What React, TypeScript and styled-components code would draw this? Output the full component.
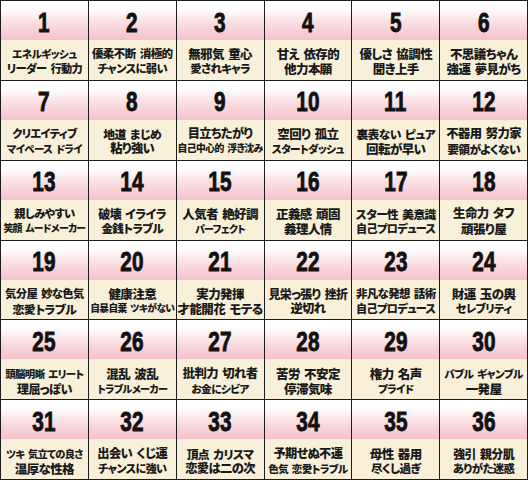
import { useLayoutEffect, useRef, useState } from "react";
import styled, { createGlobalStyle } from "styled-components";

const GlobalStyle = createGlobalStyle`
  html, body {
    margin: 0;
    padding: 0;
    background: #ffffff;
  }
`;

const Board = styled.div`
  width: 528px;
  height: 480px;
  box-sizing: border-box;
  display: grid;
  grid-template-columns: repeat(6, 1fr);
  grid-template-rows: repeat(6, 1fr);
  gap: 1px;
  padding: 1px;
  background: #1c1c1c;
`;

const Cell = styled.div`
  display: grid;
  grid-template-rows: 39px 1fr;
  overflow: hidden;
`;

const NumberBox = styled.div`
  display: flex;
  align-items: center;
  justify-content: center;
  background: linear-gradient(to bottom, #ffffff 0%, #ffffff 18%, #f9dfe3 55%, #f4c1c9 100%);
  padding-top: 4px;
`;

const Digits = styled.span`
  display: inline-block;
  font-family: "Liberation Sans", "DejaVu Sans", sans-serif;
  font-weight: 700;
  font-size: 28px;
  line-height: 28px;
  color: #111111;
  -webkit-text-stroke: 0.9px #111111;
  letter-spacing: 0.5px;
  transform: scaleX(0.74);
`;

const TextBox = styled.div`
  background: #f8f0d8;
  display: flex;
  flex-direction: column;
  align-items: center;
  justify-content: center;
  padding-top: 3px;
  font-family: "Noto Sans CJK JP", "Noto Sans", sans-serif;
  font-weight: 900;
  font-feature-settings: "palt";
  color: #1a1a1a;
`;

const Line = styled.div`
  font-size: 12.5px;
  line-height: 15px;
  white-space: nowrap;
  letter-spacing: -0.6px;
  word-spacing: 2px;
`;

// target = width (px) the line takes in the picture; only shrinks when too wide
const FitLine = ({ text, target }: { text: string; target: number }) => {
  const ref = useRef<HTMLDivElement>(null);
  const [size, setSize] = useState<number | null>(null);
  useLayoutEffect(() => {
    const el = ref.current;
    if (!el) return;
    const w = el.getBoundingClientRect().width;
    if (w > 0) setSize(Math.min(12.5, (12.5 * (target + 1)) / w));
  }, [text, target]);
  return (
    <Line ref={ref} style={size ? { fontSize: size } : undefined}>
      {text}
    </Line>
  );
};

type Row = [string, number];

const cards: { n: number; lines: Row[] }[] = [
  { n: 1, lines: [["エネルギッシュ", 64], ["リーダー 行動力", 75]] },
  { n: 2, lines: [["優柔不断 消極的", 80], ["チャンスに弱い", 69]] },
  { n: 3, lines: [["無邪気 童心", 66], ["愛されキャラ", 59]] },
  { n: 4, lines: [["甘え 依存的", 64], ["他力本願", 50]] },
  { n: 5, lines: [["優しさ 協調性", 73], ["聞き上手", 45]] },
  { n: 6, lines: [["不思議ちゃん", 67], ["強運 夢見がち", 74]] },
  { n: 7, lines: [["クリエイティブ", 64], ["マイペース ドライ", 75]] },
  { n: 8, lines: [["地道 まじめ", 57], ["粘り強い", 43]] },
  { n: 9, lines: [["目立ちたがり", 64], ["自己中心的 浮き沈み", 85]] },
  { n: 10, lines: [["空回り 孤立", 63], ["スタートダッシュ", 72]] },
  { n: 11, lines: [["裏表ない ピュア", 78], ["回転が早い", 59]] },
  { n: 12, lines: [["不器用 努力家", 74], ["要領がよくない", 72]] },
  { n: 13, lines: [["親しみやすい", 60], ["笑顔 ムードメーカー", 82]] },
  { n: 14, lines: [["破壊 イライラ", 67], ["金銭トラブル", 61]] },
  { n: 15, lines: [["人気者 絶好調", 75], ["パーフェクト", 50]] },
  { n: 16, lines: [["正義感 頑固", 64], ["義理人情", 50]] },
  { n: 17, lines: [["スター性 美意識", 79], ["自己プロデュース", 79]] },
  { n: 18, lines: [["生命力 タフ", 60], ["頑張り屋", 45]] },
  { n: 19, lines: [["気分屋 妙な色気", 78], ["恋愛トラブル", 63]] },
  { n: 20, lines: [["健康注意", 47], ["自暴自棄 ツキがない", 84]] },
  { n: 21, lines: [["実力発揮", 52], ["才能開花 モテる", 85]] },
  { n: 22, lines: [["見栄っ張り 挫折", 78], ["逆切れ", 34]] },
  { n: 23, lines: [["非凡な発想 話術", 79], ["自己プロデュース", 79]] },
  { n: 24, lines: [["財運 玉の輿", 64], ["セレブリティ", 55]] },
  { n: 25, lines: [["頭脳明晰 エリート", 78], ["理屈っぽい", 54]] },
  { n: 26, lines: [["混乱 波乱", 53], ["トラブルメーカー", 70]] },
  { n: 27, lines: [["批判力 切れ者", 74], ["お金にシビア", 57]] },
  { n: 28, lines: [["苦労 不安定", 64], ["停滞気味", 51]] },
  { n: 29, lines: [["権力 名声", 53], ["プライド", 35]] },
  { n: 30, lines: [["バブル ギャンブル", 78], ["一発屋", 36]] },
  { n: 31, lines: [["ツキ 気立ての良さ", 76], ["温厚な性格", 59]] },
  { n: 32, lines: [["出会い くじ運", 69], ["チャンスに強い", 68]] },
  { n: 33, lines: [["頂点 カリスマ", 66], ["恋愛は二の次", 69]] },
  { n: 34, lines: [["予期せぬ不運", 68], ["色気 恋愛トラブル", 79]] },
  { n: 35, lines: [["母性 器用", 52], ["尽くし過ぎ", 49]] },
  { n: 36, lines: [["強引 親分肌", 60], ["ありがた迷惑", 61]] },
];

export default function App() {
  return (
    <>
      <GlobalStyle />
      <Board>
        {cards.map((c) => (
          <Cell key={c.n}>
            <NumberBox>
              <Digits>{c.n}</Digits>
            </NumberBox>
            <TextBox>
              {c.lines.map(([t, w]) => (
                <FitLine key={t} text={t} target={w} />
              ))}
            </TextBox>
          </Cell>
        ))}
      </Board>
    </>
  );
}
